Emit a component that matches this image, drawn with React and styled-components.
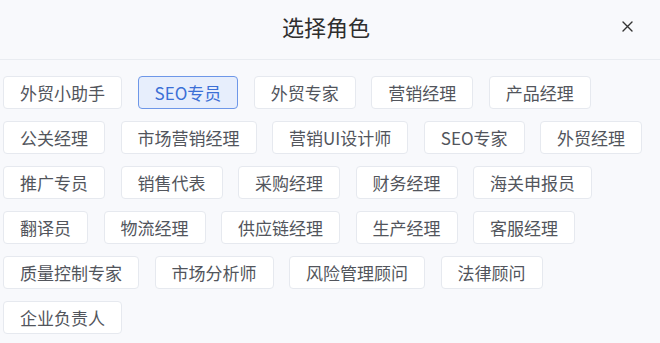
import React, { useState } from "react";
import styled, { createGlobalStyle } from "styled-components";

const GlobalStyle = createGlobalStyle`
  html, body {
    margin: 0;
    padding: 0;
    background: #f8f9fc;
  }
  body {
    font-family: "Noto Sans CJK SC", "Noto Sans", sans-serif;
  }
`;

const roles = [
  "外贸小助手",
  "SEO专员",
  "外贸专家",
  "营销经理",
  "产品经理",
  "公关经理",
  "市场营销经理",
  "营销UI设计师",
  "SEO专家",
  "外贸经理",
  "推广专员",
  "销售代表",
  "采购经理",
  "财务经理",
  "海关申报员",
  "翻译员",
  "物流经理",
  "供应链经理",
  "生产经理",
  "客服经理",
  "质量控制专家",
  "市场分析师",
  "风险管理顾问",
  "法律顾问",
  "企业负责人",
];

const App = () => {
  const [selected, setSelected] = useState("SEO专员");

  return (
    <>
      <GlobalStyle />
      <Dialog>
        <Header>
          <span />
          <Title>选择角色</Title>
          <CloseButton aria-label="关闭">
            <svg width="11" height="11" viewBox="0 0 11 11">
              <path
                d="M1 1L10 10M10 1L1 10"
                stroke="#333"
                strokeWidth="1.4"
                strokeLinecap="round"
              />
            </svg>
          </CloseButton>
        </Header>
        <TagList>
          {roles.map((role) => (
            <Tag
              key={role}
              $active={selected === role}
              onClick={() => setSelected(role)}
            >
              {role}
            </Tag>
          ))}
        </TagList>
      </Dialog>
    </>
  );
};

const Dialog = styled.div`
  width: 660px;
  height: 343px;
  overflow: hidden;
  background: #f8f9fc;
`;

const Header = styled.div`
  height: 59px;
  display: grid;
  grid-template-columns: 1fr auto 1fr;
  align-items: center;
  padding-right: 8px;
  border-bottom: 1px solid #e9ecf1;
`;

const Title = styled.h2`
  margin: 0;
  font-size: 22px;
  font-weight: 400;
  color: #2e2e2e;
  padding-bottom: 8px;
`;

const CloseButton = styled.button`
  justify-self: end;
  margin-right: 15px;
  margin-bottom: 6px;
  width: 20px;
  height: 20px;
  display: flex;
  align-items: center;
  justify-content: center;
  padding: 0;
  border: none;
  background: transparent;
  cursor: pointer;
`;

const TagList = styled.div`
  display: flex;
  flex-wrap: wrap;
  row-gap: 12px;
  column-gap: 15.5px;
  padding: 16px 5px 0 3px;
`;

const Tag = styled.button`
  height: 33px;
  padding: 0 16px;
  border-radius: 4px;
  border: 1px solid ${(p) => (p.$active ? "#6e97e8" : "#e6e9ef")};
  background: ${(p) => (p.$active ? "#e7eefc" : "#ffffff")};
  color: ${(p) => (p.$active ? "#3b6fd6" : "#52555c")};
  font-family: "Noto Sans CJK SC", "Noto Sans", sans-serif;
  font-size: 17px;
  line-height: 31px;
  white-space: nowrap;
  cursor: pointer;
`;

export default App;
